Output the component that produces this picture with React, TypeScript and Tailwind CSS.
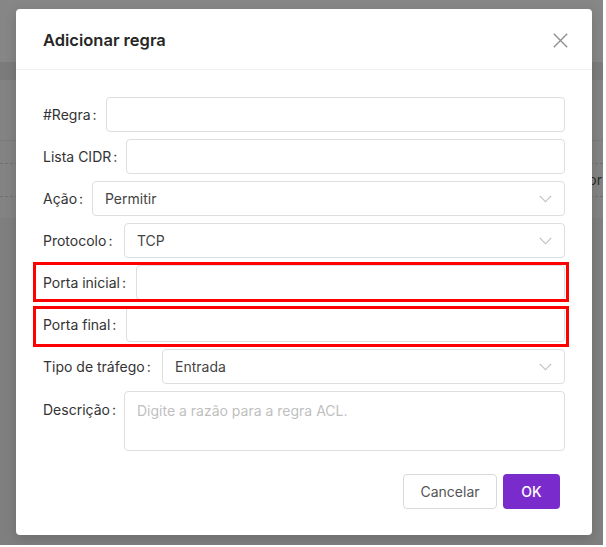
type Field = {
  label: string;
  labelWidth: string;
  kind: 'input' | 'select' | 'textarea';
  value?: string;
  placeholder?: string;
  mark?: string;
};

const fields: Field[] = [
  { label: '#Regra', labelWidth: 'w-[63px]', kind: 'input' },
  { label: 'Lista CIDR', labelWidth: 'w-[83px]', kind: 'input' },
  { label: 'Ação', labelWidth: 'w-[49px]', kind: 'select', value: 'Permitir' },
  { label: 'Protocolo', labelWidth: 'w-[81px]', kind: 'select', value: 'TCP' },
  {
    label: 'Porta inicial',
    labelWidth: 'w-[93px]',
    kind: 'input',
    mark: '-top-[3px] -bottom-[2px]',
  },
  {
    label: 'Porta final',
    labelWidth: 'w-[83px]',
    kind: 'input',
    mark: '-top-[1px] -bottom-[5px]',
  },
  { label: 'Tipo de tráfego', labelWidth: 'w-[119px]', kind: 'select', value: 'Entrada' },
  {
    label: 'Descrição',
    labelWidth: 'w-[81px]',
    kind: 'textarea',
    placeholder: 'Digite a razão para a regra ACL.',
  },
];

function Chevron() {
  return (
    <svg width="13" height="8" viewBox="0 0 13 8" fill="none" className="text-[#bdbdbd]">
      <path d="M0.8 0.8 L6.5 6.8 L12.2 0.8" stroke="currentColor" strokeWidth="1.1" />
    </svg>
  );
}

function CloseIcon() {
  return (
    <svg width="15" height="15" viewBox="0 0 15 15" fill="none" className="text-[#8c8c8c]">
      <path d="M0.8 0.8 L14.2 14.2 M14.2 0.8 L0.8 14.2" stroke="currentColor" strokeWidth="1.3" />
    </svg>
  );
}

function FormRow({ field }: { field: Field }) {
  return (
    <div className={`relative flex ${field.kind === 'textarea' ? 'items-start' : 'items-center'}`}>
      <label
        className={`${field.labelWidth} shrink-0 whitespace-nowrap text-[14px] text-[#333] ${
          field.kind === 'textarea' ? 'pt-[8px]' : ''
        }`}
      >
        {field.label}
        <span className="ml-[2px]">:</span>
      </label>

      {field.kind === 'input' && (
        <div className="h-[35px] flex-1 rounded-[4px] border border-[#dedede] bg-white" />
      )}

      {field.kind === 'select' && (
        <div className="flex h-[35px] flex-1 items-center justify-between rounded-[4px] border border-[#dedede] bg-white pl-[12px] pr-[12px]">
          <span className="text-[14px] text-[#444]">{field.value}</span>
          <Chevron />
        </div>
      )}

      {field.kind === 'textarea' && (
        <div className="h-[60px] flex-1 rounded-[4px] border border-[#dedede] bg-white px-[12px] pt-[8px] text-[14px] text-[#bfbfbf]">
          {field.placeholder}
        </div>
      )}

      {field.mark && (
        <div
          className={`pointer-events-none absolute -left-[10px] -right-[4px] ${field.mark} border-[3px] border-[#ff0000]`}
        />
      )}
    </div>
  );
}

export default function App() {
  return (
    <div
      className="h-[547px] w-[606px] bg-white pb-[2px] pr-[3px]"
      style={{ fontFamily: 'Inter, "Liberation Sans", sans-serif' }}
    >
      <div className="relative h-full w-full overflow-hidden bg-[#7f7f7f]">
        {/* page behind the mask */}
        <div className="h-[62px] bg-[#868686]" />
        <div className="h-[18px] bg-[#7b7b7b]" />
        <div className="h-[60px] bg-[#838383]" />
        <div className="flex h-[78px] flex-col justify-center border-t border-[#7a7a7a] bg-[#838383]">
          <div className="border-t border-dashed border-[#6e6e6e]" />
          <div className="flex h-[32px] items-center justify-end pr-[1px] text-[14px] text-[#2e2e2e]">
            <span>or</span>
          </div>
          <div className="border-t border-dashed border-[#6e6e6e]" />
        </div>

        {/* dialog */}
        <div className="absolute left-[16px] top-[9px] flex h-[526px] w-[576px] flex-col rounded-[4px] bg-white shadow-[0_4px_12px_rgba(0,0,0,0.15)]">
          <div className="flex h-[61px] items-center justify-between border-b border-[#f0f0f0] pl-[27px] pr-[24px] pt-[3px]">
            <h2 className="text-[16.5px] font-semibold text-[#262626]">Adicionar regra</h2>
            <CloseIcon />
          </div>

          <div className="flex flex-col gap-[7px] px-[27px] pt-[27px]">
            {fields.map((f) => (
              <FormRow key={f.label} field={f} />
            ))}
          </div>

          <div className="flex justify-end gap-[6px] pr-[32px] pt-[23px]">
            <button className="h-[35px] w-[94px] rounded-[4px] border border-[#d9d9d9] bg-white text-[14px] text-[#555]">
              Cancelar
            </button>
            <button className="h-[35px] w-[57px] rounded-[4px] bg-[#7a2bcb] text-[14px] font-medium text-white">
              OK
            </button>
          </div>
        </div>
      </div>
    </div>
  );
}
